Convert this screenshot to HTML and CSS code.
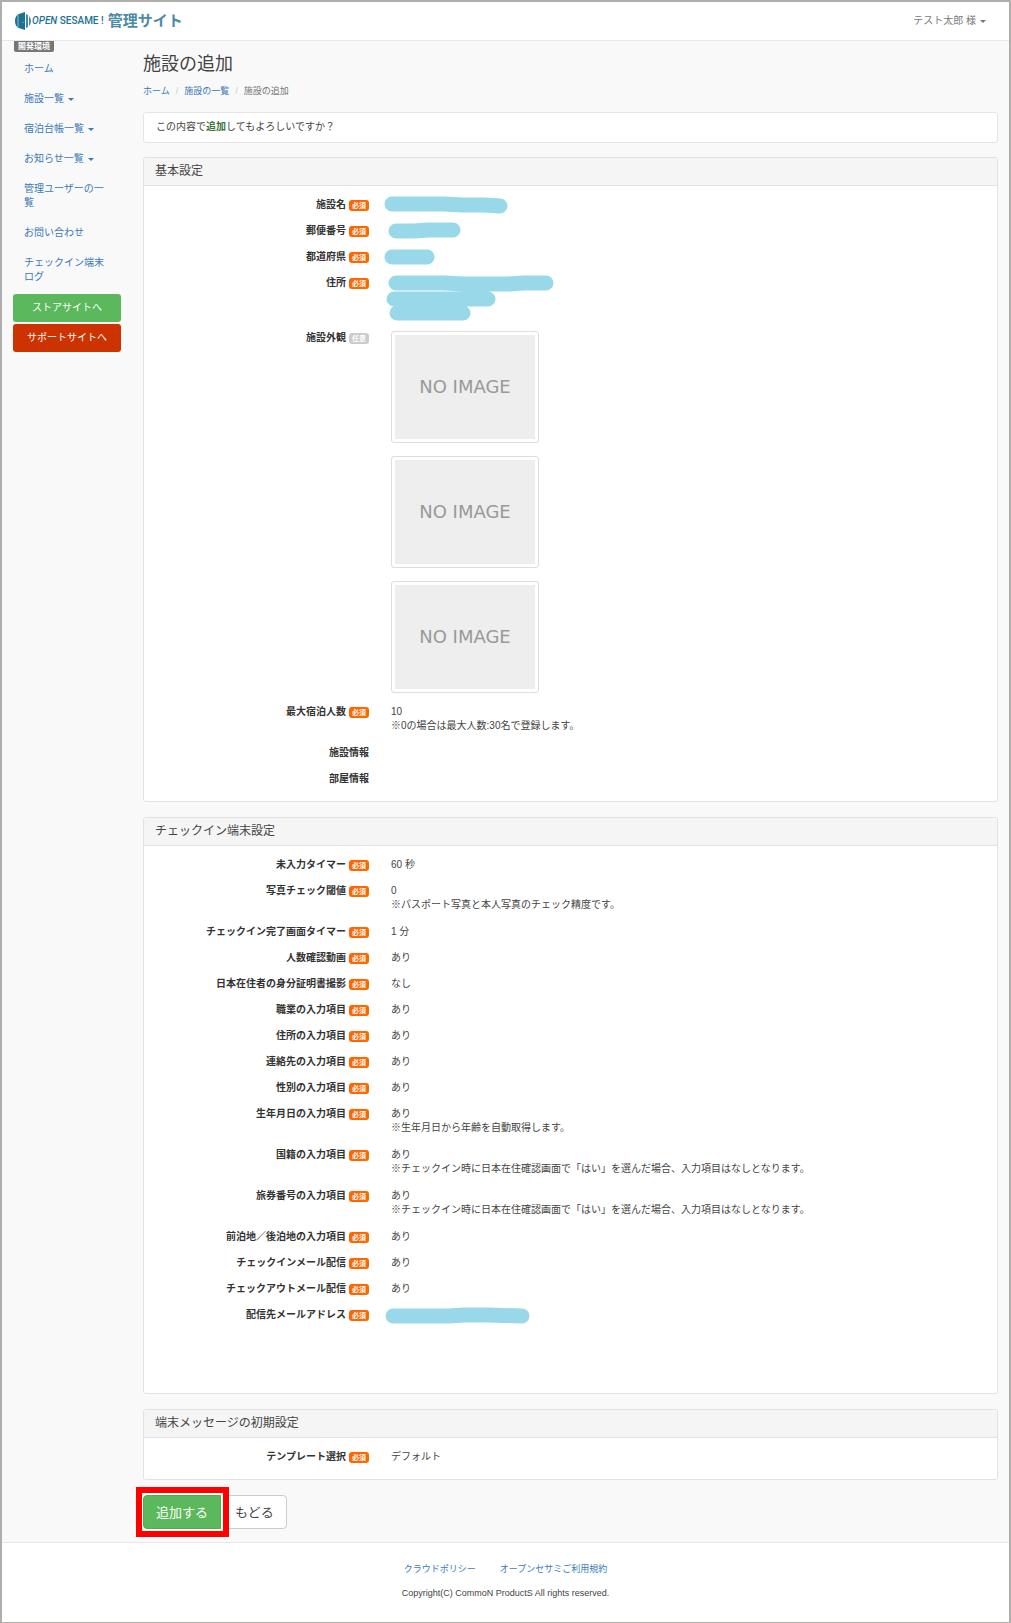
FILE: index.html
```html
<!DOCTYPE html>
<html lang="ja">
<head>
  <meta charset="UTF-8"/>
  <meta name="viewport" content="width=device-width, initial-scale=1.0"/>
  <title>施設の追加 - 管理サイト</title>
  <link rel="stylesheet" href="styles.css">
</head>
<body>

  <header class="navbar">
    <a class="brand" href="#">
      <svg class="brand-icon" width="16" height="18" viewBox="0 0 16 18">
        <path d="M10 0v18L4 16C1 15 0 12 0 9s1-6 4-7z" fill="#1c7293"/>
        <path d="M3 3v12M8 10v1" stroke="#8fc0d2" stroke-width="1"/>
        <path d="M11 2c3 1 5 4 5 7s-2 6-5 7z" fill="#3d8eac"/>
        <path d="M10.500 1v16M13.500 3v12" stroke="#fff" stroke-width="1"/>
      </svg>
      <span class="brand-name"><i>OPEN</i> SESAME !</span>
      <span class="brand-title">管理サイト</span>
    </a>
    <a class="user-menu" href="#">テスト太郎 様<span class="caret"></span></a>
  </header>

  <div class="container">
    <nav class="sidebar">
      <span class="env">開発環境</span>
      <a href="#">ホーム</a>
      <a href="#">施設一覧<span class="caret"></span></a>
      <a href="#">宿泊台帳一覧<span class="caret"></span></a>
      <a href="#">お知らせ一覧<span class="caret"></span></a>
      <a href="#">管理ユーザーの一覧</a>
      <a href="#">お問い合わせ</a>
      <a href="#">チェックイン端末ログ</a>
      <a class="side-btn store" href="#">ストアサイトへ</a>
      <a class="side-btn support" href="#">サポートサイトへ</a>
    </nav>

    <main class="content">
      <h1>施設の追加</h1>
      <ol class="breadcrumb">
        <li><a href="#">ホーム</a></li>
        <li><a href="#">施設の一覧</a></li>
        <li>施設の追加</li>
      </ol>

      <p class="message">この内容で<strong>追加</strong>してもよろしいですか？</p>

      <section class="panel">
        <h2>基本設定</h2>
        <dl>
          <div class="row">
            <dt>施設名<span class="badge">必須</span></dt>
            <dd><svg class="mask" width="124" height="14"><path d="M8 6H60L78 7H100L116 8"/></svg></dd>
          </div>
          <div class="row">
            <dt>郵便番号<span class="badge">必須</span></dt>
            <dd><svg class="mask" width="124" height="14"><path d="M12 7H30L45 6H69"/></svg></dd>
          </div>
          <div class="row">
            <dt>都道府県<span class="badge">必須</span></dt>
            <dd><svg class="mask" width="124" height="14"><path d="M8 7H43"/></svg></dd>
          </div>
          <div class="row">
            <dt>住所<span class="badge">必須</span></dt>
            <dd><svg class="mask" width="170" height="43"><path d="M12 7H60L80 8H125L140 7H162M10 23H104M13 37H79"/></svg></dd>
          </div>
          <div class="row">
            <dt>施設外観<span class="badge optional">任意</span></dt>
            <dd class="photos">
              <div class="thumb"><span>NO IMAGE</span></div>
              <div class="thumb"><span>NO IMAGE</span></div>
              <div class="thumb"><span>NO IMAGE</span></div>
            </dd>
          </div>
          <div class="row">
            <dt>最大宿泊人数<span class="badge">必須</span></dt>
            <dd>10<p class="note">※0の場合は最大人数:30名で登録します。</p></dd>
          </div>
          <div class="row"><dt>施設情報</dt><dd></dd></div>
          <div class="row"><dt>部屋情報</dt><dd></dd></div>
        </dl>
      </section>

      <section class="panel">
        <h2>チェックイン端末設定</h2>
        <dl class="terminal">
          <div class="row"><dt>未入力タイマー<span class="badge">必須</span></dt><dd>60 秒</dd></div>
          <div class="row">
            <dt>写真チェック閾値<span class="badge">必須</span></dt>
            <dd>0<p class="note">※パスポート写真と本人写真のチェック精度です。</p></dd>
          </div>
          <div class="row"><dt>チェックイン完了画面タイマー<span class="badge">必須</span></dt><dd>1 分</dd></div>
          <div class="row"><dt>人数確認動画<span class="badge">必須</span></dt><dd>あり</dd></div>
          <div class="row"><dt>日本在住者の身分証明書撮影<span class="badge">必須</span></dt><dd>なし</dd></div>
          <div class="row"><dt>職業の入力項目<span class="badge">必須</span></dt><dd>あり</dd></div>
          <div class="row"><dt>住所の入力項目<span class="badge">必須</span></dt><dd>あり</dd></div>
          <div class="row"><dt>連絡先の入力項目<span class="badge">必須</span></dt><dd>あり</dd></div>
          <div class="row"><dt>性別の入力項目<span class="badge">必須</span></dt><dd>あり</dd></div>
          <div class="row">
            <dt>生年月日の入力項目<span class="badge">必須</span></dt>
            <dd>あり<p class="note">※生年月日から年齢を自動取得します。</p></dd>
          </div>
          <div class="row">
            <dt>国籍の入力項目<span class="badge">必須</span></dt>
            <dd>あり<p class="note">※チェックイン時に日本在住確認画面で「はい」を選んだ場合、入力項目はなしとなります。</p></dd>
          </div>
          <div class="row">
            <dt>旅券番号の入力項目<span class="badge">必須</span></dt>
            <dd>あり<p class="note">※チェックイン時に日本在住確認画面で「はい」を選んだ場合、入力項目はなしとなります。</p></dd>
          </div>
          <div class="row"><dt>前泊地／後泊地の入力項目<span class="badge">必須</span></dt><dd>あり</dd></div>
          <div class="row"><dt>チェックインメール配信<span class="badge">必須</span></dt><dd>あり</dd></div>
          <div class="row"><dt>チェックアウトメール配信<span class="badge">必須</span></dt><dd>あり</dd></div>
          <div class="row">
            <dt>配信先メールアドレス<span class="badge">必須</span></dt>
            <dd><svg class="mask" width="150" height="14"><path d="M9 8H65L80 7H105L138 8"/></svg></dd>
          </div>
        </dl>
      </section>

      <section class="panel">
        <h2>端末メッセージの初期設定</h2>
        <dl>
          <div class="row"><dt>テンプレート選択<span class="badge">必須</span></dt><dd>デフォルト</dd></div>
        </dl>
      </section>

      <form class="actions">
        <span class="highlight"><button class="btn btn-add" type="submit">追加する</button></span>
        <button class="btn btn-back" type="button">もどる</button>
      </form>
    </main>
  </div>

  <footer class="footer">
    <div class="footer-links">
      <a href="#">クラウドポリシー</a>
      <a href="#">オープンセサミご利用規約</a>
    </div>
    <p>Copyright(C) CommoN ProductS All rights reserved.</p>
  </footer>

</body>
</html>
```
FILE: styles.css
```css
* {
  box-sizing: border-box;
}
body {
  margin: 0;
  min-height: 100vh;
  display: flex;
  flex-direction: column;
  border: 2px solid #b0adad;
  background: #f9f9f9;
  color: #444;
  font-family: "Liberation Sans", "Noto Sans CJK JP", sans-serif;
  font-size: 10px;
  line-height: 14px;
}
a {
  color: #3a7ab8;
  text-decoration: none;
}
h1, h2, p, dl, dd, ol {
  margin: 0;
  padding: 0;
  font-weight: normal;
}
.caret {
  display: inline-block;
  margin-left: 4px;
  vertical-align: middle;
  border-top: 3px solid;
  border-left: 3px solid transparent;
  border-right: 3px solid transparent;
}

.navbar {
  display: flex;
  justify-content: space-between;
  align-items: center;
  height: 39px;
  padding: 0 23px 0 13px;
  background: #fff;
  border-bottom: 1px solid #e7e7e7;
}
.brand {
  display: flex;
  align-items: center;
  color: #1c7293;
}
.brand-name {
  margin: 0 4px 0 1px;
  font-family: Roboto, sans-serif;
  font-size: 10px;
  font-weight: 500;
}
.brand-title {
  color: #4a8ba6;
  font-size: 15px;
  font-weight: bold;
}
.user-menu {
  color: #777;
}

.container {
  display: flex;
  gap: 22px;
  padding: 0 11px;
}
.sidebar {
  flex: 0 0 108px;
  display: flex;
  flex-direction: column;
}
.sidebar a {
  padding: 8px 11px;
}
.env {
  align-self: flex-start;
  margin-left: 1px;
  margin-bottom: 2px;
  padding: 0 4px;
  background: #777;
  border-radius: 0 0 2px 2px;
  color: #fff;
  font-size: 8px;
  font-weight: bold;
  line-height: 11px;
}
.sidebar .side-btn {
  margin-top: 2px;
  padding: 7px 0;
  border-radius: 3px;
  color: #fff;
  text-align: center;
}
.store {
  background: #5cb85c;
}
.support {
  background: #cc3300;
}

.content {
  flex: 1;
  min-width: 0;
}
h1 {
  margin-top: 12px;
  font-size: 18px;
  line-height: 22px;
}
.breadcrumb {
  display: flex;
  margin: 9px 0 14px;
  list-style: none;
  font-size: 9px;
  color: #777;
}
.breadcrumb li + li::before {
  content: "/";
  padding: 0 6px;
  color: #ccc;
}
.message {
  margin-bottom: 14px;
  padding: 7px 12px 8px;
  background: #fff;
  border: 1px solid #e5e5e5;
  border-radius: 3px;
}
.message strong {
  color: #3c763d;
}

.panel {
  margin-bottom: 15px;
  background: #fff;
  border: 1px solid #e2e2e2;
  border-radius: 3px;
}
.panel h2 {
  padding: 6px 11px;
  background: #f5f5f5;
  border-bottom: 1px solid #e2e2e2;
  font-size: 12px;
  line-height: 15px;
}
.panel dl {
  padding: 12px 0 3px;
}
.panel .terminal {
  padding-bottom: 59px;
}
.row {
  display: grid;
  grid-template-columns: 225px 1fr;
  column-gap: 22px;
  padding-bottom: 12px;
}
.row dt {
  text-align: right;
  font-weight: bold;
  color: #333;
}
.row dd {
  min-width: 0;
}
.note {
  padding-bottom: 1px;
}
.badge {
  display: inline-block;
  margin-left: 3px;
  padding: 0 3px;
  border-radius: 3px;
  background: #ff6600;
  color: #fff;
  font-size: 7px;
  line-height: 11px;
}
.optional {
  background: #ccc;
}
.mask {
  display: block;
  margin-left: -7px;
  overflow: visible;
}
.mask path {
  fill: none;
  stroke: #99d8e8;
  stroke-width: 15;
  stroke-linecap: round;
  stroke-linejoin: round;
}
.photos {
  display: flex;
  flex-direction: column;
  gap: 13px;
}
.thumb {
  width: 148px;
  height: 112px;
  padding: 3px;
  border: 1px solid #ddd;
  border-radius: 3px;
}
.thumb span {
  display: flex;
  height: 100%;
  align-items: center;
  justify-content: center;
  background: #eee;
  color: #999;
  font-family: "DejaVu Sans", sans-serif;
  font-size: 18px;
}

.actions {
  display: flex;
}
.highlight {
  margin: -8px 0 -8px -7px;
  border: 6px solid #ff0000;
  background: #fff;
  padding: 2px 2px 1px 1px;
  z-index: 1;
}
.btn {
  display: block;
  height: 34px;
  padding: 0 12px 2px;
  border: 1px solid #ccc;
  border-radius: 4px;
  background: #fff;
  color: #444;
  font-family: inherit;
  font-size: 13px;
}
.btn-add {
  border-color: #4cae4c;
  border-radius: 4px 0 0 4px;
  background: #5cb85c;
  color: #fff;
}
.btn-back {
  margin-left: -7px;
}

.footer {
  flex: 1;
  margin-top: 13px;
  padding: 19px 0 22px;
  background: #fff;
  border-top: 1px solid #e7e7e7;
  font-size: 9px;
  text-align: center;
}
.footer-links {
  display: flex;
  justify-content: center;
  gap: 24px;
  margin-bottom: 10px;
}
```
